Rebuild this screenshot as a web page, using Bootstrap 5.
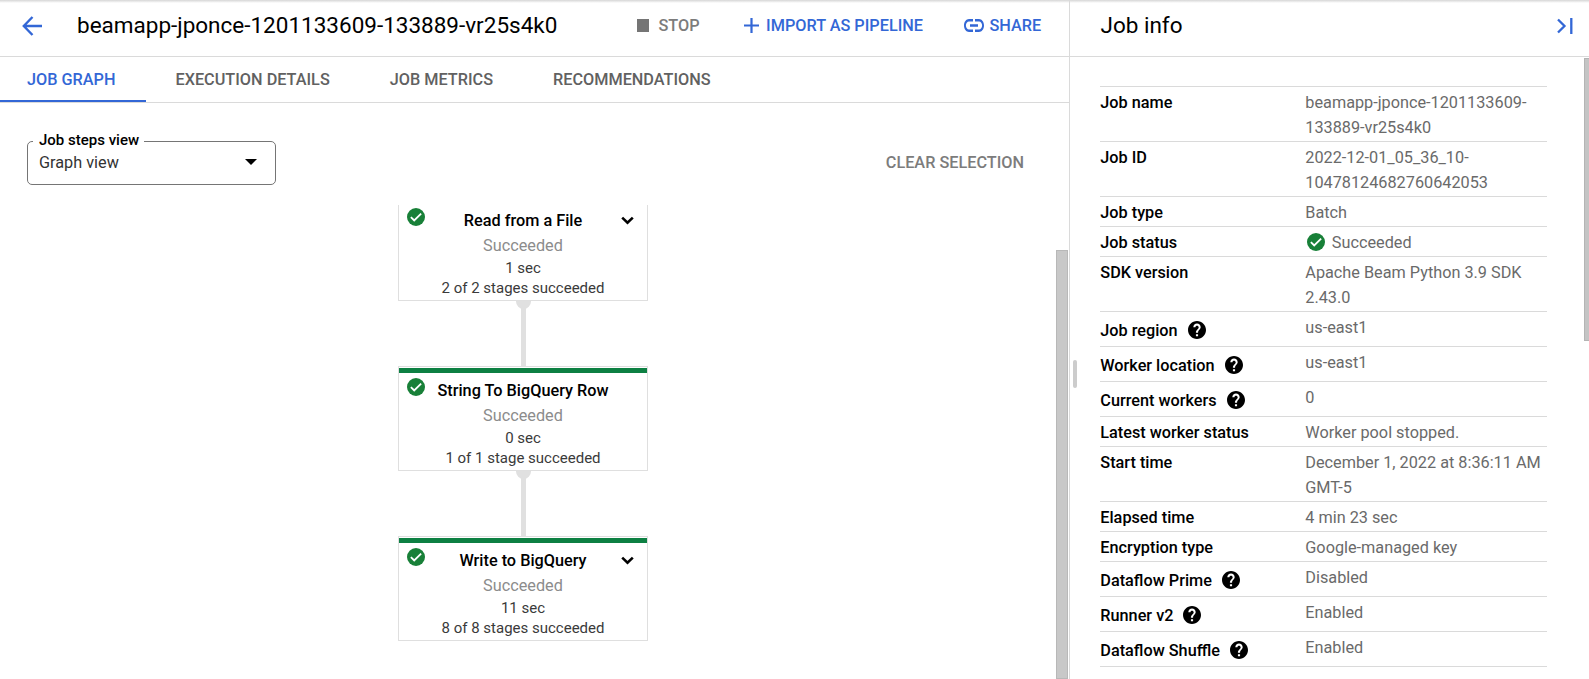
<!DOCTYPE html>
<html lang="en">
<head>
<meta charset="utf-8">
<meta name="viewport" content="width=device-width, initial-scale=1">
<title>Dataflow job</title>
<link href="https://cdn.jsdelivr.net/npm/bootstrap@5.3.0/dist/css/bootstrap.min.css" rel="stylesheet">
<style>
  body { font-family: Roboto, "Liberation Sans", sans-serif; font-size: 16.25px; line-height: 25px; color: #000; background: #fff; height: 679px; overflow: hidden; }
  svg { display: block; flex: none; }
  .app-shell { height: 679px; background: linear-gradient(#d6d6d6, #fff 3px); }
  .main-pane { width: 1069px; flex: none; }
  .bar { height: 57px; border-bottom: 1px solid #dadada; padding-bottom: 5px; }
  .heading { font-size: 22.5px; line-height: 30px; font-weight: 400; margin: 0 0 2px; white-space: nowrap; }
  .job-title { margin-left: 35px; width: 560px; }
  .action { font-weight: 500; font-size: 16.25px; color: #3367d6; border: 0; padding: 0; line-height: 25px; white-space: nowrap; }
  .muted { color: #7c7c7c; }
  .tab-row { height: 46px; border-bottom: 1px solid #dadada; }
  .tab-row .nav-link { color: #616161; font-weight: 500; padding: 10px 30px 8px; height: 45px; border-bottom: 2px solid transparent; white-space: nowrap; }
  .tab-row .nav-link:first-child { padding-left: 27px; }
  .tab-row .nav-link.active { color: #3367d6; border-color: #3367d6; }
  .toolbar { padding: 38px 45px 0 27px; height: 102px; }
  .view-select { width: 249px; height: 44px; border: 1px solid #757575; border-radius: 5px; padding: 0 18px 2px 11px; color: #333; }
  .view-label { left: 5px; top: -12px; padding: 0 5px 0 6px; background: #fff; font-size: 15px; line-height: 20px; font-weight: 500; color: #000; white-space: nowrap; }
  .graph { width: 250px; margin-left: 398px; height: 474px; overflow: hidden; }
  .step { height: 105px; border: 1px solid #dfdfdf; text-align: center; background: #fff; flex: none; }
  .step-cut { height: 96px; border-top: 0; }
  .step-bar { height: 5px; background: #0d8043; margin-top: 1px; }
  .step-body { padding: 5px 7.5px 0; }
  .step-cut .step-body { padding-top: 3px; }
  .step-name { font-weight: 500; line-height: 25px; }
  .step-state { color: #8c8c8c; line-height: 25px; }
  .step-info { font-size: 15px; line-height: 20px; color: #3a3a3a; }
  .step-tick { width: 18px; margin-top: -.5px; }
  .step-toggle { margin: 8px 6px 0 -1px; }
  .wire { height: 65px; width: 5px; background: #e0e0e0; margin: 0 auto; flex: none; }
  .wire::before { content: ""; display: block; width: 15px; height: 8px; margin-left: -5px; background: #e0e0e0; border-radius: 0 0 8px 8px; }
  .graph-thumb { right: 1px; top: 250px; bottom: 0; width: 12px; background: #c8c8c8; border: 1px solid #b8b8b8; }
  .info-pane { border-left: 1px solid #dadada; }
  .handle { left: 3px; top: 360px; width: 4px; height: 28px; border-radius: 2px; background: #ccc; }
  .info-thumb { right: 0; top: 58px; width: 5px; height: 283px; background: #c4c4c4; border: 1px solid #b4b4b4; border-right: 0; }
  .facts { margin: 29px 42px 0 30px; border-top: 1px solid #dadada; }
  .fact { border-bottom: 1px solid #dadada; padding: 3px 0 1px .3px; }
  .fact dt { width: 205px; flex: none; font-weight: 500; line-height: 25px; white-space: nowrap; }
  .fact dd { margin: 0; color: #6a6a6a; line-height: 25px; white-space: nowrap; }
  .fact-help dt { padding-top: 3px; height: 30px; }
  .fact-help dt svg { margin: 2.5px 0 0 10px; }
</style>
</head>
<body>
<svg width="0" height="0" class="position-absolute" aria-hidden="true">
  <symbol id="tick" viewBox="2 2 20 20"><circle cx="12" cy="12" r="10" fill="#188038"/><path d="M6.300 12.200l3.700 3.600 7.700-7.600" fill="none" stroke="#fff" stroke-width="2"/></symbol>
  <symbol id="help" viewBox="2 2 20 20"><path d="M12 2C6.480 2 2 6.480 2 12s4.480 10 10 10 10-4.480 10-10S17.520 2 12 2zm1.200 17h-2.400v-2.300h2.400V19zm1.870-7.750l-.9.920C13.450 12.900 13.200 13.500 13.200 15h-2.400v-.5c0-1.100.65-2.100 1.370-2.830l1.240-1.260c.37-.36.45-.86.45-1.410 0-1-.8-1.700-1.860-1.700S10.200 8 10.200 9H7.900c0-2.210 1.890-4.100 4.100-4.100s4.100 1.890 4.100 4.100c0 .88-.4 1.680-1.030 2.250z"/></symbol>
  <symbol id="chev" viewBox="0 0 13 9"><path d="M1.200 1.600l5.300 5.100 5.300-5.100" fill="none" stroke="#000" stroke-width="2.600"/></symbol>
</svg>
<div class="app-shell d-flex">
  <main class="main-pane position-relative">
    <header class="bar d-flex align-items-center">
      <svg width="20" height="20" viewBox="0 0 20 20" style="margin-left:22px" fill="none" stroke="#3367d6" stroke-width="2.400"><path d="M10.500 1L1.800 10l8.700 9M2 10h18"/></svg>
      <h1 class="heading job-title">beamapp-jponce-1201133609-133889-vr25s4k0</h1>
      <button class="btn action muted d-flex align-items-center"><svg width="12" height="13"><rect width="12" height="13" fill="#757575"/></svg><span style="margin-left:9.500px">STOP</span></button>
      <button class="btn action d-flex align-items-center" style="margin-left:44px"><svg width="15" height="15" viewBox="0 0 15 15" style="margin-right:7.500px"><path d="M7.500 0v15M0 7.500h15" stroke="#3367d6" stroke-width="2.200"/></svg>IMPORT AS PIPELINE</button>
      <button class="btn action d-flex align-items-center" style="margin-left:41px"><svg width="20" height="13" viewBox="2 7 20 10" preserveAspectRatio="none" style="margin-right:5.500px"><path fill="#3367d6" d="M3.900 12c0-1.710 1.390-3.100 3.100-3.100h4V7H7c-2.760 0-5 2.240-5 5s2.240 5 5 5h4v-1.900H7c-1.710 0-3.100-1.390-3.100-3.100zM8 13h8v-2H8v2zm9-6h-4v1.900h4c1.710 0 3.100 1.390 3.100 3.100s-1.390 3.100-3.100 3.100h-4V17h4c2.760 0 5-2.240 5-5s-2.240-5-5-5z"/></svg>SHARE</button>
    </header>
    <nav class="nav flex-nowrap tab-row">
      <a class="nav-link active" href="#">JOB GRAPH</a>
      <a class="nav-link" href="#">EXECUTION DETAILS</a>
      <a class="nav-link" href="#">JOB METRICS</a>
      <a class="nav-link" href="#">RECOMMENDATIONS</a>
    </nav>
    <div class="toolbar d-flex justify-content-between align-items-start">
      <div class="view-select position-relative d-flex align-items-center justify-content-between">
        <span class="view-label position-absolute">Job steps view</span>
        <span>Graph view</span>
        <svg width="12" height="6" viewBox="0 0 12 6"><path d="M0 0h12L6 6z"/></svg>
      </div>
      <button class="btn action muted" style="margin-top:9px">CLEAR SELECTION</button>
    </div>
    <div class="graph d-flex flex-column">
      <section class="step step-cut">
        <div class="step-body">
          <div class="d-flex align-items-start"><svg class="step-tick" height="18"><use href="#tick"/></svg><div class="step-name flex-fill">Read from a File</div><svg class="step-toggle" width="13" height="9"><use href="#chev"/></svg></div>
          <div class="step-state">Succeeded</div>
          <div class="step-info">1 sec</div>
          <div class="step-info">2 of 2 stages succeeded</div>
        </div>
      </section>
      <div class="wire"></div>
      <section class="step">
        <div class="step-bar"></div>
        <div class="step-body">
          <div class="d-flex align-items-start"><svg class="step-tick" height="18"><use href="#tick"/></svg><div class="step-name flex-fill">String To BigQuery Row</div><span class="step-tick"></span></div>
          <div class="step-state">Succeeded</div>
          <div class="step-info">0 sec</div>
          <div class="step-info">1 of 1 stage succeeded</div>
        </div>
      </section>
      <div class="wire"></div>
      <section class="step">
        <div class="step-bar"></div>
        <div class="step-body">
          <div class="d-flex align-items-start"><svg class="step-tick" height="18"><use href="#tick"/></svg><div class="step-name flex-fill">Write to BigQuery</div><svg class="step-toggle" width="13" height="9"><use href="#chev"/></svg></div>
          <div class="step-state">Succeeded</div>
          <div class="step-info">11 sec</div>
          <div class="step-info">8 of 8 stages succeeded</div>
        </div>
      </section>
    </div>
    <div class="graph-thumb position-absolute"></div>
  </main>
  <aside class="info-pane flex-fill position-relative">
    <div class="handle position-absolute"></div>
    <div class="info-thumb position-absolute"></div>
    <header class="bar d-flex align-items-center justify-content-between">
      <h2 class="heading" style="margin-left:30.500px">Job info</h2>
      <svg width="16" height="16" viewBox="0 0 16 16" style="margin-right:16px" fill="none" stroke="#3367d6" stroke-width="2.300"><path d="M1 1.500L7.500 8 1 14.500M14.300 0v16"/></svg>
    </header>
    <dl class="facts mb-0">
      <div class="fact d-flex"><dt>Job name</dt><dd>beamapp-jponce-1201133609-<br>133889-vr25s4k0</dd></div>
      <div class="fact d-flex"><dt>Job ID</dt><dd>2022-12-01_05_36_10-<br>10478124682760642053</dd></div>
      <div class="fact d-flex"><dt>Job type</dt><dd>Batch</dd></div>
      <div class="fact d-flex"><dt>Job status</dt><dd class="d-flex"><svg width="18" height="18" style="margin:3px 6.500px 0 2px"><use href="#tick"/></svg>Succeeded</dd></div>
      <div class="fact d-flex"><dt>SDK version</dt><dd>Apache Beam Python 3.9 SDK<br>2.43.0</dd></div>
      <div class="fact fact-help d-flex"><dt class="d-flex">Job region<svg width="18" height="18"><use href="#help"/></svg></dt><dd>us-east1</dd></div>
      <div class="fact fact-help d-flex"><dt class="d-flex">Worker location<svg width="18" height="18"><use href="#help"/></svg></dt><dd>us-east1</dd></div>
      <div class="fact fact-help d-flex"><dt class="d-flex">Current workers<svg width="18" height="18"><use href="#help"/></svg></dt><dd>0</dd></div>
      <div class="fact d-flex"><dt>Latest worker status</dt><dd>Worker pool stopped.</dd></div>
      <div class="fact d-flex"><dt>Start time</dt><dd>December 1, 2022 at 8:36:11 AM<br>GMT-5</dd></div>
      <div class="fact d-flex"><dt>Elapsed time</dt><dd>4 min 23 sec</dd></div>
      <div class="fact d-flex"><dt>Encryption type</dt><dd>Google-managed key</dd></div>
      <div class="fact fact-help d-flex"><dt class="d-flex">Dataflow Prime<svg width="18" height="18"><use href="#help"/></svg></dt><dd>Disabled</dd></div>
      <div class="fact fact-help d-flex"><dt class="d-flex">Runner v2<svg width="18" height="18"><use href="#help"/></svg></dt><dd>Enabled</dd></div>
      <div class="fact fact-help d-flex"><dt class="d-flex">Dataflow Shuffle<svg width="18" height="18"><use href="#help"/></svg></dt><dd>Enabled</dd></div>
    </dl>
  </aside>
</div>
<script src="https://cdn.jsdelivr.net/npm/bootstrap@5.3.0/dist/js/bootstrap.bundle.min.js"></script>
</body>
</html>
